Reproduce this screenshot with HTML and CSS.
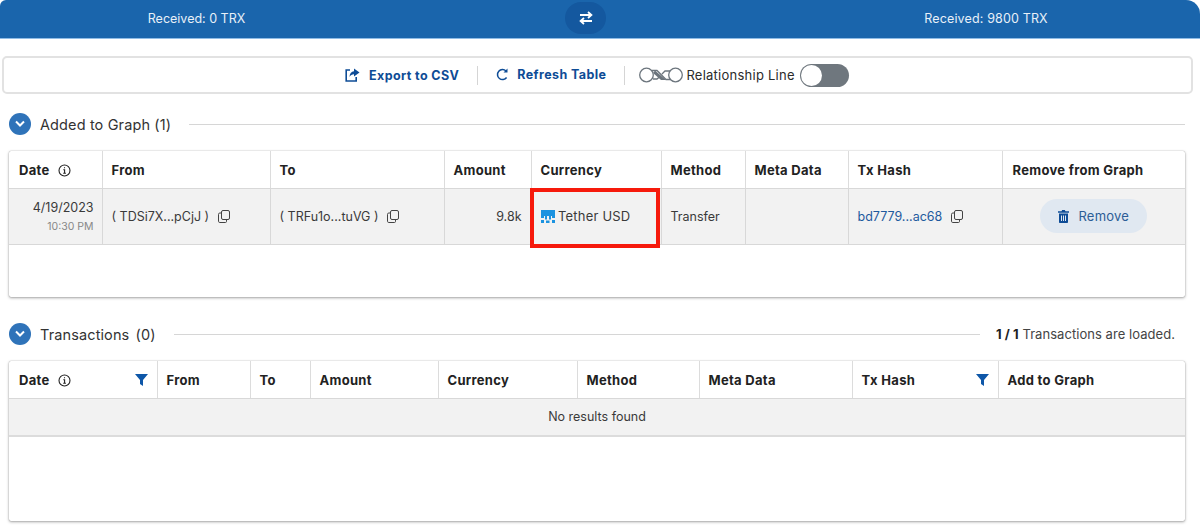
FILE: index.html
```html
<!DOCTYPE html>
<html lang="en">
<head>
  <meta charset="UTF-8" />
  <title>Transactions</title>
  <link rel="stylesheet" href="styles.css">
</head>
<body>
  <div class="top-bar">
    <div class="received">Received: 0 TRX</div>
    <button class="swap-btn">
      <svg width="16" height="14" viewBox="0 0 16 14" fill="none" stroke="#fff" stroke-width="1.8">
        <path d="M2 4h11M10 1l3.4 3L10 7" />
        <path d="M14 10H3M6 7l-3.4 3L6 13" />
      </svg>
    </button>
    <div class="received">Received: 9800 TRX</div>
  </div>

  <div class="toolbar">
    <a class="tool-link export">
      <svg width="15" height="14" viewBox="0 0 15 14">
        <path d="M5 2H1.2v11h10V9" fill="none" stroke="#0e4c96" stroke-width="1.6" />
        <path d="M9 0.5l5.5 4L9 8.5V6.2C7 6.2 5.5 7 4.5 9c0-3.4 1.800-5.600 4.500-5.800z" fill="#0e4c96" />
      </svg>
      Export to CSV
    </a>
    <span class="tool-sep"></span>
    <a class="tool-link refresh">
      <svg width="13" height="13" viewBox="0 0 13 13" fill="none">
        <path d="M10.600 9.500A5 5 0 1 1 10 3" stroke="#0e4c96" stroke-width="1.500" />
        <path d="M11.500 0.500v4h-4z" fill="#0e4c96" />
      </svg>
      Refresh Table
    </a>
    <span class="tool-sep"></span>
    <svg class="chain" width="44" height="16" viewBox="0 0 44 16" fill="none" stroke="#6c757d" stroke-width="1.300">
      <circle cx="7.500" cy="8" r="6.800" />
      <circle cx="36.500" cy="8" r="6.800" />
      <path d="M13 3.500h5l9 9h4.500M14 12h4l3.500-3M23 7l3-3h5" />
      <path d="M16 3.500l11 9.500h-5l-8-7z" fill="#6c757d" stroke="none" />
    </svg>
    <span class="rel-label">Relationship Line</span>
    <span class="toggle"><span class="knob"></span></span>
  </div>

  <div class="section-head first">
    <span class="chevron">
      <svg width="12" height="8" viewBox="0 0 12 8" fill="none" stroke="#fff" stroke-width="2"><path d="M2 1.500l4 4 4-4" /></svg>
    </span>
    <span class="section-title">Added to Graph (1)</span>
    <span class="section-line"></span>
  </div>

  <div class="card card-added">
    <table>
      <colgroup>
        <col class="a1"><col class="a2"><col class="a3"><col class="a4"><col class="a5">
        <col class="a6"><col class="a7"><col class="a8"><col class="a9">
      </colgroup>
      <thead>
        <tr>
          <th>Date
            <svg class="info" width="13" height="13" viewBox="0 0 13 13" fill="none" stroke="#222" stroke-width="1.100"><circle cx="6.500" cy="6.500" r="5.500" /><path d="M5.300 5.800h1.300v3.300M5.200 9.200h2.700M6.500 3.200v1.100" /></svg>
          </th>
          <th>From</th>
          <th>To</th>
          <th>Amount</th>
          <th>Currency</th>
          <th>Method</th>
          <th>Meta Data</th>
          <th>Tx Hash</th>
          <th>Remove from Graph</th>
        </tr>
      </thead>
      <tbody>
        <tr>
          <td class="date-cell">4/19/2023<small>10:30 PM</small></td>
          <td>( TDSi7X...pCjJ )
            <svg class="copy" width="12" height="13" viewBox="0 0 12 13" fill="none" stroke="#444" stroke-width="1"><rect x="3.500" y="0.500" width="8" height="9" rx="1.500" /><path d="M3 3H1.800C1 3 .5 3.500 .5 4.300v7c0 .8.500 1.200 1.300 1.200h5.700c.7 0 1-.4 1-1.100V10" /></svg>
          </td>
          <td>( TRFu1o...tuVG )
            <svg class="copy" width="12" height="13" viewBox="0 0 12 13" fill="none" stroke="#444" stroke-width="1"><rect x="3.500" y="0.500" width="8" height="9" rx="1.500" /><path d="M3 3H1.800C1 3 .5 3.500 .5 4.300v7c0 .8.500 1.200 1.300 1.200h5.700c.7 0 1-.4 1-1.100V10" /></svg>
          </td>
          <td class="num">9.8k</td>
          <td class="marked">
            <svg class="coin" width="14" height="13" viewBox="0 0 14 13" fill="#1c93e0"><path d="M0 0h14v8h-3V6h-1v3.500H8V6H6v3.500H4V6H3v2H0z" /><rect x="0" y="10" width="3" height="3" /><rect x="5" y="10.500" width="3.500" height="2.500" /><rect x="11" y="10" width="3" height="3" /></svg>
            <span class="coin-name">Tether USD</span>
          </td>
          <td>Transfer</td>
          <td></td>
          <td><span class="hash">bd7779...ac68</span>
            <svg class="copy" width="12" height="13" viewBox="0 0 12 13" fill="none" stroke="#444" stroke-width="1"><rect x="3.500" y="0.500" width="8" height="9" rx="1.500" /><path d="M3 3H1.800C1 3 .5 3.500 .5 4.300v7c0 .8.500 1.200 1.300 1.200h5.700c.7 0 1-.4 1-1.100V10" /></svg>
          </td>
          <td class="center">
            <button class="remove-btn">
              <svg width="11" height="13" viewBox="0 0 11 13" fill="#0e4c96"><path d="M3.500 1.300L4.200 0h2.600l.7 1.300H11v1.400H0V1.300z" /><path d="M1 3.500h9V12c0 .6-.4 1-1 1H2c-.6 0-1-.4-1-1zM3 5.500v5.500h1V5.500zm2 0v5.500h1V5.500zm2 0v5.500h1V5.500z" fill-rule="evenodd" /></svg>
              Remove
            </button>
          </td>
        </tr>
      </tbody>
    </table>
  </div>

  <div class="section-head second">
    <span class="chevron">
      <svg width="12" height="8" viewBox="0 0 12 8" fill="none" stroke="#fff" stroke-width="2"><path d="M2 1.500l4 4 4-4" /></svg>
    </span>
    <span class="section-title">Transactions <span class="count">(0)</span></span>
    <span class="section-line"></span>
    <span class="loaded"><b>1 / 1</b> Transactions are loaded.</span>
  </div>

  <div class="card card-tx">
    <table>
      <colgroup>
        <col class="b1"><col class="b2"><col class="b3"><col class="b4"><col class="b5">
        <col class="b6"><col class="b7"><col class="b8"><col class="b9">
      </colgroup>
      <thead>
        <tr>
          <th>
            <div class="th-split">
              <span>Date
                <svg class="info" width="13" height="13" viewBox="0 0 13 13" fill="none" stroke="#222" stroke-width="1.100"><circle cx="6.500" cy="6.500" r="5.500" /><path d="M5.300 5.800h1.300v3.300M5.200 9.200h2.700M6.500 3.200v1.100" /></svg>
              </span>
              <svg width="13" height="12" viewBox="0 0 13 12" fill="#0e57a8"><path d="M0 0h13L8 6v6L5 10V6z" /></svg>
            </div>
          </th>
          <th>From</th>
          <th>To</th>
          <th>Amount</th>
          <th>Currency</th>
          <th>Method</th>
          <th>Meta Data</th>
          <th>
            <div class="th-split">
              <span>Tx Hash</span>
              <svg width="13" height="12" viewBox="0 0 13 12" fill="#0e57a8"><path d="M0 0h13L8 6v6L5 10V6z" /></svg>
            </div>
          </th>
          <th>Add to Graph</th>
        </tr>
      </thead>
      <tbody>
        <tr>
          <td class="empty" colspan="9">No results found</td>
        </tr>
      </tbody>
    </table>
  </div>
</body>
</html>
```

FILE: styles.css
```css
* {
  box-sizing: border-box;
}

body {
  margin: 0;
  min-height: 100vh;
  background: #fff;
  color: #2b2b2b;
  font-family: 'Inter', 'Liberation Sans', sans-serif;
  font-size: 13px;
  overflow: hidden;
}

.top-bar {
  height: 39px;
  background: #1a65ac;
  border-bottom: 1px solid #8fbce6;
  border-radius: 6px 14px 0 0;
  display: grid;
  grid-template-columns: 565px 41px 1fr;
  padding-top: 2px;
  color: #e8f0f8;
}

.received {
  display: flex;
  align-items: center;
  justify-content: center;
  height: 32px;
  font-size: 12.5px;
}

.top-bar .received:first-child {
  padding-right: 172px;
}

.top-bar .received:last-child {
  padding-left: 166px;
  letter-spacing: 0.15px;
}

.swap-btn {
  width: 41px;
  height: 32px;
  border: none;
  border-radius: 16px;
  background: #14589f;
  display: flex;
  align-items: center;
  justify-content: center;
  padding: 0;
}

.toolbar {
  margin: 17px 7px 0 2px;
  height: 38px;
  border: 2px solid #e2e2e2;
  border-radius: 5px;
  display: flex;
  align-items: center;
  padding-left: 341px;
}

.tool-link {
  display: flex;
  align-items: center;
  gap: 9px;
  color: #0e4c96;
  font-weight: 700;
  font-size: 12.5px;
  letter-spacing: 0.4px;
}

.tool-link.refresh {
  gap: 8px;
  margin-top: -2px;
}

.tool-sep {
  width: 1px;
  height: 19px;
  background: #d5d5d5;
  margin: 0 18px;
}

.chain {
  margin-left: -4px;
}

.rel-label {
  margin-left: 3px;
  font-size: 13px;
  letter-spacing: 0.25px;
}

.toggle {
  width: 49px;
  height: 23px;
  margin-left: 5px;
  border-radius: 12px;
  background: #6f777e;
  padding: 1px;
  display: block;
}

.knob {
  display: block;
  width: 21px;
  height: 21px;
  border-radius: 50%;
  background: #fff;
}

.section-head {
  display: flex;
  align-items: center;
  margin: 0 15px 0 9px;
  height: 22px;
}

.section-head.first {
  margin-top: 19px;
}

.section-head.second {
  margin-top: 26px;
}

.chevron {
  width: 22px;
  height: 22px;
  border-radius: 50%;
  background: #2f73b9;
  display: flex;
  align-items: center;
  justify-content: center;
  flex: none;
}

.section-title {
  margin-left: 9px;
  font-size: 14.5px;
  letter-spacing: 0.12px;
  color: #333;
}

.count {
  margin-left: 2px;
}

.section-line {
  flex: 1;
  height: 1px;
  background: #d6d6d6;
  margin-left: 18px;
}

.loaded {
  margin-left: 16px;
  margin-right: 10px;
  font-size: 13px;
  letter-spacing: 0.05px;
  color: #444;
}

.loaded b {
  color: #222;
}

.card {
  margin: 0 15px 0 9px;
  box-shadow: 0 0 1px rgba(0, 0, 0, 0.4), 0 1px 3px rgba(0, 0, 0, 0.35);
  border-radius: 2px;
  background: #fff;
}

.card-added {
  margin-top: 16px;
  height: 146px;
}

.card-tx {
  margin-top: 16px;
  height: 160px;
}

table {
  width: 100%;
  border-collapse: collapse;
  table-layout: fixed;
}

.a1 { width: 93px; }
.a2 { width: 168px; }
.a3 { width: 174px; }
.a4 { width: 87px; }
.a5 { width: 130px; }
.a6 { width: 84px; }
.a7 { width: 103px; }
.a8 { width: 154px; }
.a9 { width: 183px; }

.b1 { width: 148px; }
.b2 { width: 93px; }
.b3 { width: 60px; }
.b4 { width: 128px; }
.b5 { width: 139px; }
.b6 { width: 122px; }
.b7 { width: 153px; }
.b8 { width: 146px; }
.b9 { width: 187px; }

th {
  height: 37px;
  padding: 2px 9px 0;
  text-align: left;
  font-size: 13px;
  font-weight: 700;
  letter-spacing: 0.3px;
  color: #222;
  border-left: 1px solid #dcdcdc;
  border-bottom: 1px solid #d8d8d8;
  white-space: nowrap;
}

th:first-child {
  border-left: none;
  padding-left: 10px;
}

.card-added th:last-child {
  padding-left: 10px;
}

td {
  height: 56px;
  padding: 0 9px;
  background: #f2f2f2;
  font-size: 12.5px;
  border-left: 1px solid #d8d8d8;
  border-bottom: 1px solid #d8d8d8;
  white-space: nowrap;
  color: #3a3a3a;
}

td:first-child {
  border-left: none;
}

.info {
  margin-left: 5px;
  vertical-align: -2px;
}

.th-split {
  display: flex;
  align-items: center;
  justify-content: space-between;
}

.date-cell {
  text-align: right;
  line-height: 17px;
  padding-top: 2px;
  padding-right: 8px;
}

.date-cell small {
  display: block;
  margin-top: 2px;
  font-size: 10.5px;
  color: #888;
}

.copy {
  margin-left: 5px;
  vertical-align: -2px;
}

.num {
  text-align: right;
}

.marked {
  position: relative;
}

.marked::after {
  content: "";
  box-sizing: border-box;
  position: absolute;
  left: -2px;
  top: -1px;
  width: 130px;
  height: 60px;
  border: 4px solid #f61a0c;
}

.coin {
  vertical-align: -2px;
}

.coin-name {
  font-size: 13px;
  letter-spacing: 0.2px;
}

.hash {
  color: #1f5a9e;
}

.center {
  text-align: center;
}

.remove-btn {
  display: inline-flex;
  align-items: center;
  gap: 9px;
  width: 107px;
  height: 34px;
  justify-content: center;
  border: none;
  border-radius: 17px;
  background: #e0e8f1;
  color: #2c5d96;
  font-family: inherit;
  font-size: 13px;
  letter-spacing: 0.2px;
  padding: 0;
}

.empty {
  height: 38px;
  text-align: center;
  border-bottom: 2px solid #dcdcdc;
}
```
